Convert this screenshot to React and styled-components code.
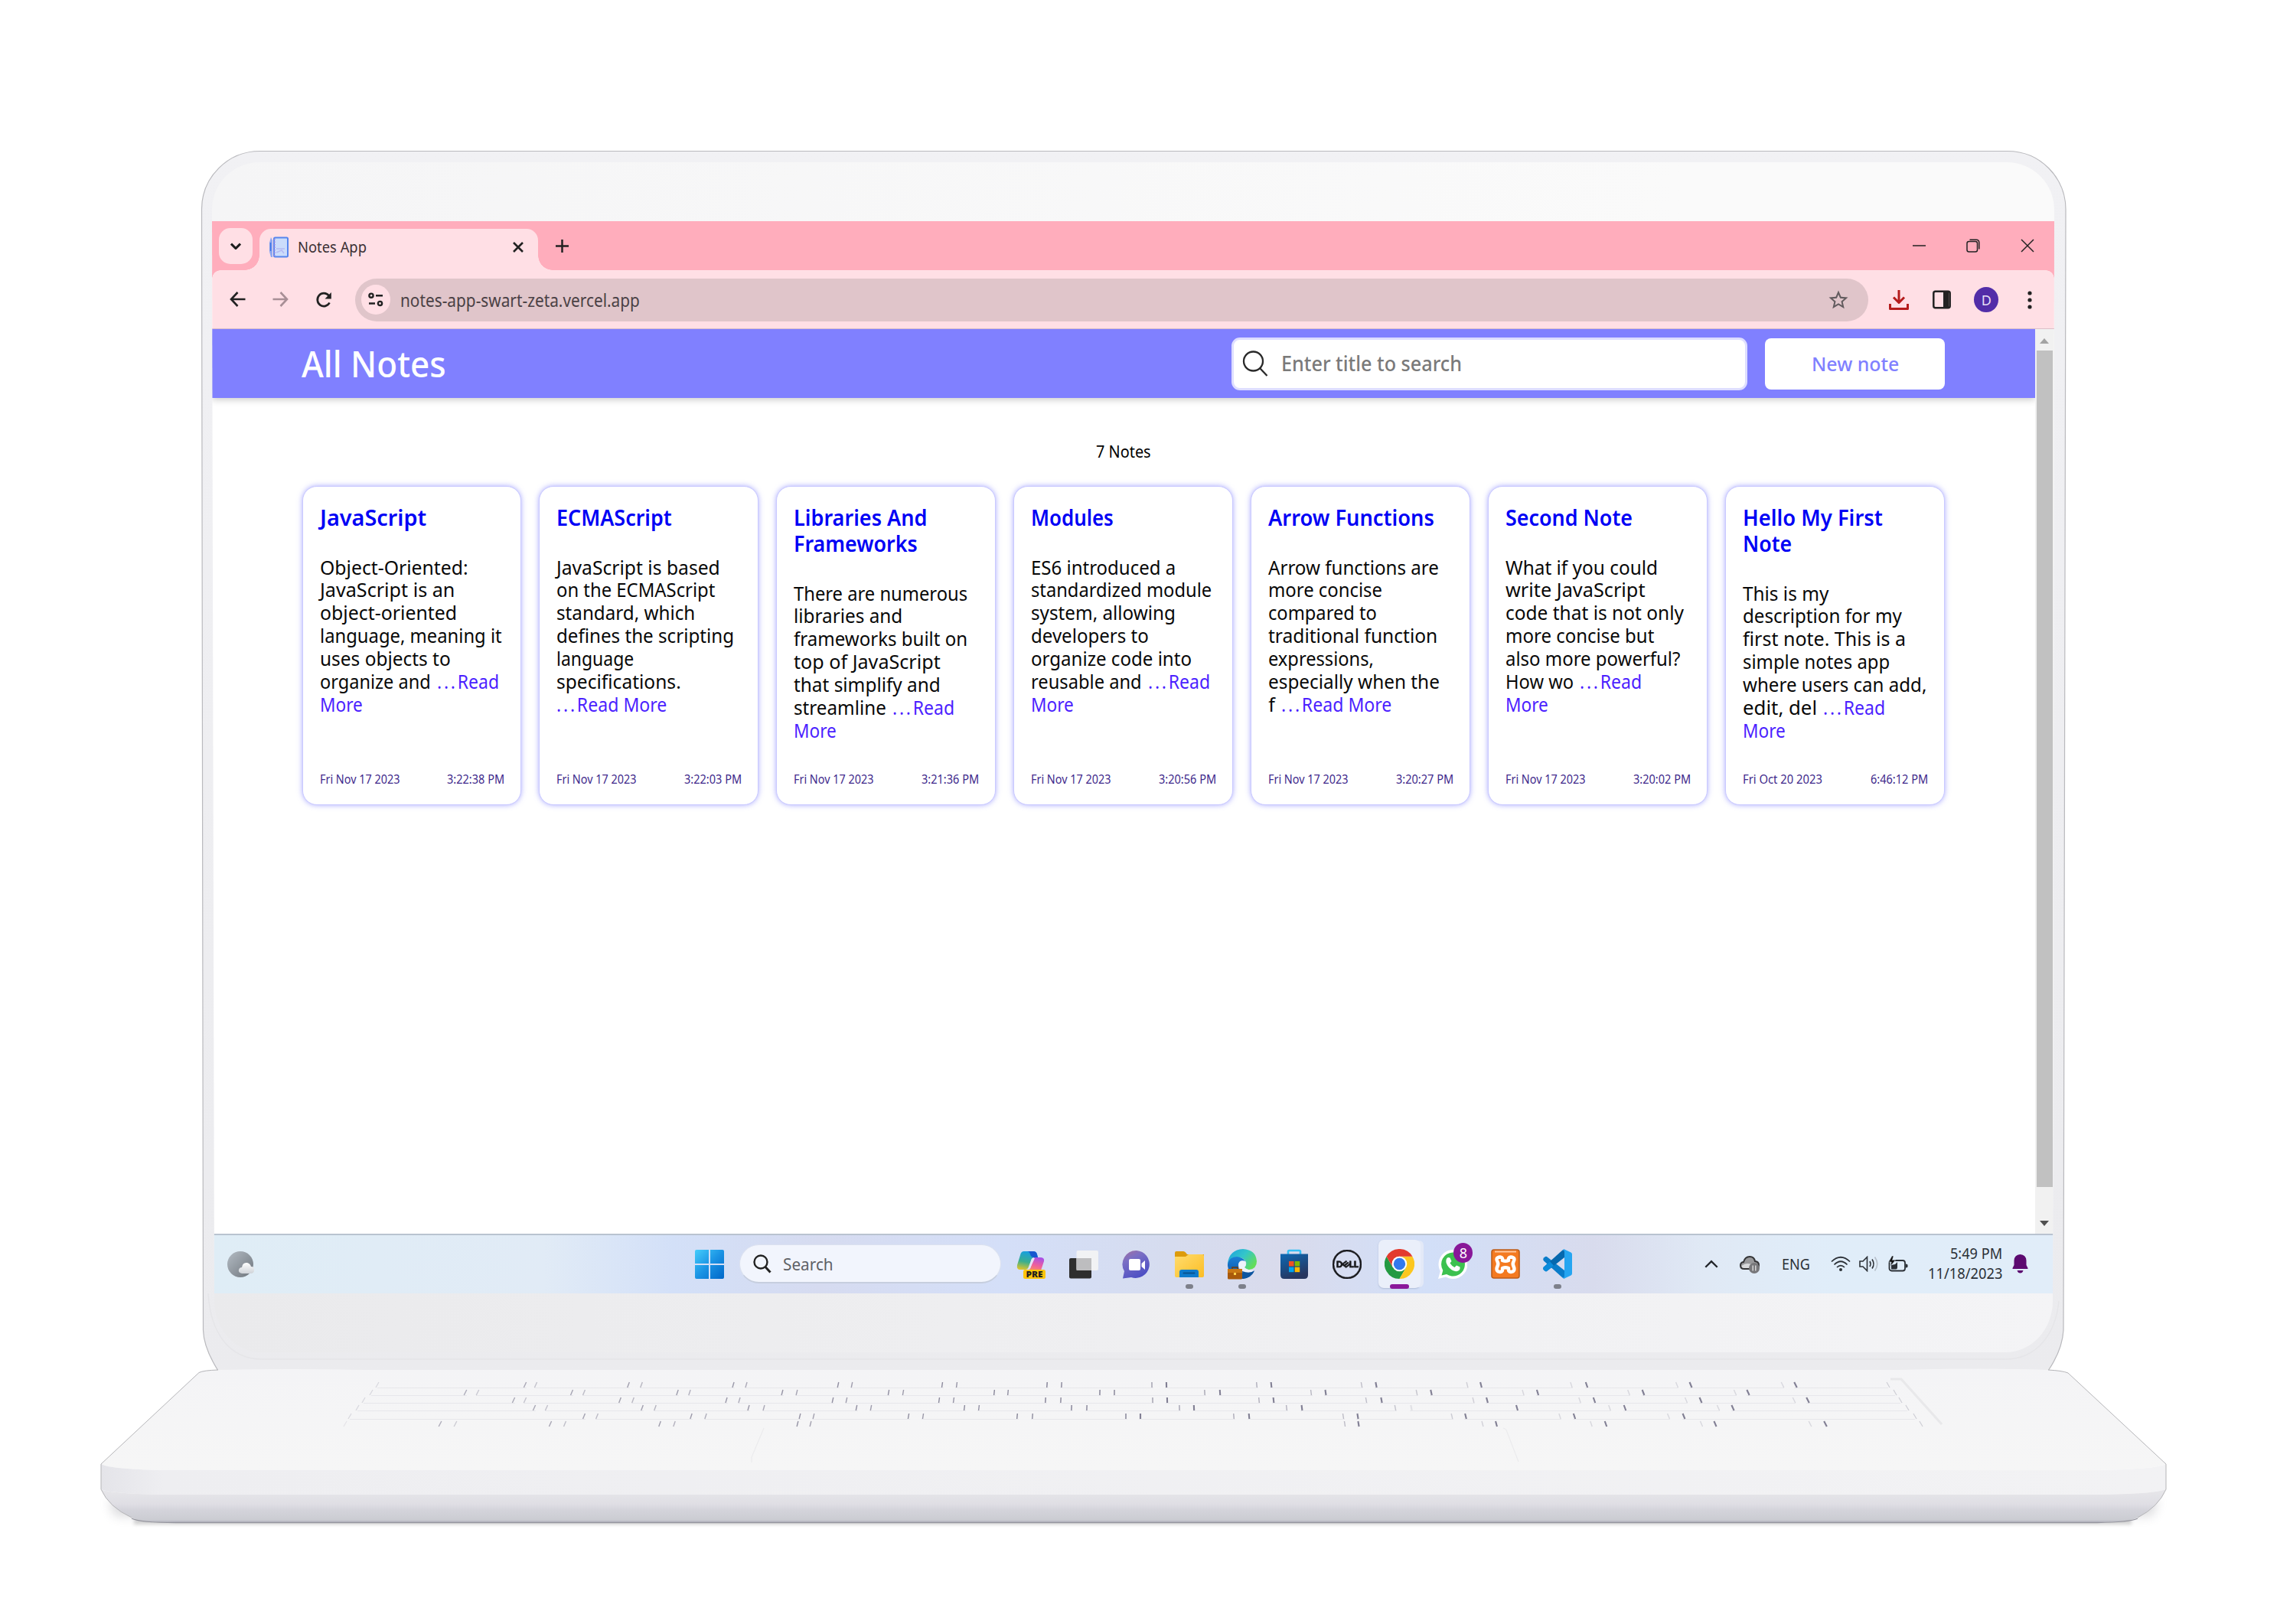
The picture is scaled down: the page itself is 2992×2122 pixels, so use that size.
import React, { useLayoutEffect, useRef, useState } from "react";
import styled, { createGlobalStyle } from "styled-components";
import { SiDell } from "react-icons/si";
import { MdStarBorder } from "react-icons/md";

const GlobalStyle = createGlobalStyle`
  * { box-sizing: border-box; }
  html, body { margin: 0; padding: 0; background: #fff; }
  body { font-family: "Noto Sans", "Open Sans", sans-serif; color: #080808; }
`;

/* ---------- text fitted to a measured width ---------- */

const FitBox = styled.span`
  display: inline-block;
  white-space: nowrap;
`;
const FitInner = styled.span`
  display: inline-block;
  white-space: nowrap;
  transform-origin: 0 50%;
`;

function Fit({ w, children }) {
  const ref = useRef(null);
  const [scale, setScale] = useState(1);
  useLayoutEffect(() => {
    const natural = ref.current.offsetWidth;
    if (natural) setScale((w + 2) / natural);
  }, [w, children]);
  return (
    <FitBox style={{ width: w }}>
      <FitInner ref={ref} style={{ transform: `translateX(-1px) scaleX(${scale})` }}>
        {children}
      </FitInner>
    </FitBox>
  );
}

/* ---------- page frame ---------- */

const Stage = styled.main`
  position: relative;
  width: 2992px;
  height: 2122px;
  padding: 289px 308px 0 277px;
  overflow: hidden;
  background: #fff;
`;
const LaptopArt = styled.svg`
  position: absolute;
  inset: 0;
`;
const Screen = styled.section`
  position: relative;
  display: flex;
  flex-direction: column;
  width: 2407px;
  height: 1401px;
  background: #fff;
  clip-path: polygon(0 0, 100% 0, calc(100% - 2px) 100%, 3px 100%);
`;

/* ---------- laptop drawing ---------- */

const KEY_ROWS = [
  { y: 1806, start: 493, end: 2467, gaps: [[686, 700], [821, 838], [958, 975], [1095, 1113], [1231, 1250], [1368, 1387], [1505, 1524], [1642, 1661], [1779, 1798], [1917, 1935], [2053, 2073], [2191, 2209], [2329, 2346]] },
  { y: 1816, start: 485, end: 2476, gaps: [[608, 624], [747, 763], [885, 901], [1022, 1041], [1161, 1180], [1299, 1317], [1437, 1456], [1574, 1594], [1713, 1732], [1851, 1870], [1990, 2009], [2128, 2147], [2267, 2284]] },
  { y: 1826, start: 475, end: 2483, gaps: [[671, 686], [810, 827], [949, 966], [1088, 1106], [1227, 1246], [1366, 1386], [1506, 1525], [1645, 1664], [1785, 1805], [1925, 1943], [2064, 2083], [2203, 2222], [2344, 2362]] },
  { y: 1836, start: 467, end: 2492, gaps: [[698, 714], [839, 856], [978, 998], [1119, 1138], [1260, 1279], [1400, 1420], [1541, 1560], [1681, 1701], [1823, 1844], [null, 1982], [2103, 2123], [2245, 2264]] },
  { y: 1847, start: 457, end: 2502, gaps: [[763, 780], [903, 922], [1045, 1063], [1187, 1206], [1329, 1349], [1471, 1490], [1612, 1632], [1755, 1774], [1897, 1915], [2038, 2057], [2180, 2200]] },
  { y: 1857, start: 451, end: 2510, plain: true, gaps: [[575, 595], [719, 738], [862, 881], [1042, 1059], [1757, 1775], [1937, 1955], [2079, 2098], [2223, 2241], [2365, 2385]] },
];

function KeyMark({ x, y, opacity, width = 1.6 }) {
  const d = ((x - 1481) / 1481) * 3;
  return <path d={`M${x - d} ${y}L${x + d} ${y + 7}`} stroke="#55526e" strokeWidth={width} opacity={opacity} />;
}

function KeyRow({ row }) {
  const rightOp = (x) => (x < 1481 ? 0.4 + (x - 450) / 3000 : Math.max(0.18, 0.55 - (x - 1481) / 1400));
  const leftOp = (x) => (x < 1481 ? 0.18 + (x - 450) / 1900 : 0.72);
  return (
    <g fill="none">
      {!row.plain && <path d={`M${row.start} ${row.y + 7.5}H${row.end}`} stroke="#e7e7eb" strokeWidth="1" />}
      <KeyMark x={row.start} y={row.y} opacity={row.plain ? 0.1 : 0.18} width={1.2} />
      {row.gaps.map(([a, b]) => (
        <g key={b}>
          {a && !row.plain && <path d={`M${a + 2} ${row.y + 7.5}H${b - 2}`} stroke="#f4f4f6" strokeWidth="1.4" />}
          {a && <KeyMark x={a} y={row.y} opacity={rightOp(a)} width={1.4} />}
          <KeyMark x={b} y={row.y} opacity={b === 1844 ? 0.12 : leftOp(b)} width={b > 1481 ? 2.1 : 1.4} />
        </g>
      ))}
      <KeyMark x={row.end} y={row.y} opacity={0.24} width={1.2} />
    </g>
  );
}

function Laptop() {
  return (
    <LaptopArt width="2992" height="2122" viewBox="0 0 2992 2122" aria-hidden="true">
      <defs>
        <linearGradient id="lidEdge" x1="0" y1="0" x2="0" y2="1">
          <stop offset="0" stopColor="#f1f1f4" />
          <stop offset="1" stopColor="#ebebee" />
        </linearGradient>
        <linearGradient id="lidTop" x1="0" y1="0" x2="1" y2="0">
          <stop offset="0" stopColor="#f5f5f6" />
          <stop offset=".8" stopColor="#fafafa" />
        </linearGradient>
        <linearGradient id="lidBottom" x1="0" y1="0" x2="1" y2="0">
          <stop offset="0" stopColor="#eaeaec" />
          <stop offset="1" stopColor="#f4f4f6" />
        </linearGradient>
        <linearGradient id="deck" x1="0" y1="0" x2="0" y2="1">
          <stop offset="0" stopColor="#f4f4f6" />
          <stop offset="1" stopColor="#f6f6f6" />
        </linearGradient>
        <linearGradient id="frontUpper" x1="0" y1="0" x2="1" y2="0">
          <stop offset="0" stopColor="#e4e4e9" />
          <stop offset=".03" stopColor="#eeeef1" />
          <stop offset="1" stopColor="#f2f2f4" />
        </linearGradient>
        <linearGradient id="frontLower" x1="0" y1="0" x2="0" y2="1">
          <stop offset="0" stopColor="#e7e7ea" />
          <stop offset=".45" stopColor="#dfdee4" />
          <stop offset=".65" stopColor="#d3d3da" />
          <stop offset=".93" stopColor="#cbccd2" />
          <stop offset="1" stopColor="#b4b4c0" />
        </linearGradient>
        <filter id="soft" x="-5%" y="-200%" width="110%" height="500%">
          <feGaussianBlur stdDeviation="7" />
        </filter>
        <filter id="thin" x="-5%" y="-200%" width="110%" height="500%">
          <feGaussianBlur stdDeviation="2" />
        </filter>
      </defs>
      <path d="M142 1960L2820 1960L2812 1981H150Z" fill="#8d8d94" opacity=".32" filter="url(#soft)" />
      <rect x="175" y="1984" width="2610" height="8" fill="#9b9b9b" opacity=".42" filter="url(#thin)" />

      <path d="M285 1791C273 1772 266 1756 265.500 1738L263.500 273A76 76 0 0 1 339.500 197.500H2623A76 76 0 0 1 2699 273.500L2696 1738C2695 1756 2689 1772 2676 1791Z" fill="url(#lidEdge)" stroke="#b9b9bd" strokeWidth="1.2" />
      <path d="M277 330V274A62 62 0 0 1 339 212H2622A62 62 0 0 1 2684 274V330Z" fill="url(#lidTop)" />
      <path d="M280 1650H2682V1700A62 67 0 0 1 2620 1767H342A62 67 0 0 1 280 1700Z" fill="url(#lidBottom)" />
      <path d="M272 1690C275 1742 300 1776 342 1776H2620C2662 1776 2686 1742 2690 1700" fill="none" stroke="#e5e5e8" strokeWidth="1.4" />

      <path d="M260 1793.500C264 1790 280 1790.500 285 1790Q380 1788 476 1790H2480Q2600 1787 2676 1790Q2695 1791 2702 1794L2830 1913Q2815 1920 2740 1921H220Q145 1920 132 1913Z" fill="url(#deck)" />
      <path d="M132 1913Q145 1920 220 1921H2740Q2815 1920 2830 1913V1946Q2815 1952 2740 1953H220Q145 1952 132 1946Z" fill="url(#frontUpper)" />
      <path d="M132 1946Q145 1952 220 1953H2740Q2815 1952 2830 1946Q2820 1969 2793 1983Q2783 1988.500 2740 1989H230Q180 1988.500 172 1983Q142 1969 132 1946Z" fill="url(#frontLower)" />
      <path d="M172 1984Q182 1989.500 230 1989.500H2740Q2783 1989 2793 1984" fill="none" stroke="#96969f" strokeWidth="1.3" />
      <path d="M172 1983Q142 1969 132 1946V1913L260 1793.500Q266 1790.500 285 1790M2676 1790Q2695 1791 2702 1794L2830 1913V1946Q2820 1969 2793 1983" fill="none" stroke="#b5b5b8" strokeWidth="1" />

      {KEY_ROWS.map((row) => (
        <KeyRow key={row.y} row={row} />
      ))}
      <path d="M2470 1802H2484L2537 1861" fill="none" stroke="#e8e8ea" strokeWidth="3" />
      <path d="M1964 1866Q1968 1867 1969 1871L1984 1910M998 1866L982 1904V1911" fill="none" stroke="#ebebed" strokeWidth="1.2" />
    </LaptopArt>
  );
}

/* ---------- browser chrome ---------- */

const TabStrip = styled.div`
  display: flex;
  align-items: flex-start;
  height: 64px;
  padding-left: 9px;
  background: #ffadbc;
`;
const TabListButton = styled.button`
  display: grid;
  place-items: center;
  width: 44px;
  height: 47px;
  margin: 9px 9px 0 0;
  padding: 0;
  border: 0;
  border-radius: 15px;
  background: #ffdfe5;
`;
const Tab = styled.div`
  position: relative;
  display: flex;
  align-items: center;
  width: 364px;
  height: 54px;
  margin-top: 10px;
  padding: 0 19px 7px 12px;
  border-radius: 15px 15px 0 0;
  background: #ffdfe5;
  font-size: 20px;
  color: #3b3034;
  &::before, &::after {
    content: "";
    position: absolute;
    bottom: 0;
    width: 19px;
    height: 19px;
  }
  &::before { left: -19px; background: radial-gradient(circle at 0 0, transparent 18.5px, #ffdfe5 19px); }
  &::after { right: -19px; background: radial-gradient(circle at 100% 0, transparent 18.5px, #ffdfe5 19px); }
`;
const TabTitle = styled.span`
  flex: 1;
  margin-left: 13px;
  line-height: 28px;
`;
const NewTab = styled.span`
  display: flex;
  margin: 24px 0 0 23px;
`;
const WindowControls = styled.div`
  display: flex;
  gap: 53px;
  align-items: center;
  height: 64px;
  margin-left: auto;
  padding-right: 26px;
`;
const Toolbar = styled.div`
  position: relative;
  display: flex;
  align-items: center;
  height: 77px;
  padding: 1px 29px 0 23px;
  border-bottom: 1px solid #dcbfc9;
  background: #ffdfe5;
  &::before, &::after {
    content: "";
    position: absolute;
    top: 0;
    width: 11px;
    height: 11px;
  }
  &::before { left: 0; background: radial-gradient(circle at 100% 100%, transparent 10.5px, #ffadbc 11px); }
  &::after { right: 0; background: radial-gradient(circle at 0 100%, transparent 10.5px, #ffadbc 11px); }
`;
const NavIcons = styled.div`
  display: flex;
  gap: 35px;
  width: 164px;
`;
const Omnibox = styled.div`
  display: flex;
  align-items: center;
  width: 1977px;
  height: 56px;
  padding: 0 24px 0 8px;
  border-radius: 28px;
  background: #e0c5ca;
  font-size: 24px;
  color: #4a4145;
`;
const SiteInfo = styled.span`
  display: grid;
  place-items: center;
  width: 38px;
  height: 39px;
  margin-right: 14px;
  border-radius: 50%;
  background: #ffdfe5;
`;
const Url = styled.span`
  flex: 1;
  line-height: 34px;
`;
const ToolbarActions = styled.div`
  display: flex;
  align-items: center;
  justify-content: space-between;
  width: 187px;
  margin-left: 27px;
`;
const Avatar = styled.span`
  display: grid;
  place-items: center;
  width: 32px;
  height: 33px;
  margin-right: 7px;
  border-radius: 50%;
  background: #522da8;
  color: #e6def5;
  font-size: 18px;
  line-height: 1;
`;

const ChevronIcon = ({ up, w = 13, color = "#1f1f1f", sw = 3 }) => (
  <svg width={w} height={w * 0.66} viewBox="0 0 14 9" fill="none" stroke={color} strokeWidth={sw}>
    <path d={up ? "M1 7.500L7 1.500L13 7.500" : "M1 1.500L7 7.500L13 1.500"} />
  </svg>
);
const NotebookIcon = () => (
  <svg width="26" height="28" viewBox="0 0 26 28">
    <path d="M1 8L3 1L5 5V27H3L1 20Z" fill="#8ea8f0" />
    <path d="M2.500 8V19" stroke="#3f74e6" strokeWidth="1.500" />
    <rect x="7" y="1.500" width="18" height="25" rx="1.500" fill="#cbdcfb" stroke="#5585ee" strokeWidth="2" />
    <path d="M8 3V26" stroke="#b08adf" strokeWidth="1.500" strokeDasharray="1.500 2" />
    <path d="M10 16H21M10 21L17 18L20 22" stroke="#b4b9f3" strokeWidth="1.500" fill="none" />
  </svg>
);
const CrossIcon = ({ s, sw, color = "#222" }) => (
  <svg width={s} height={s} viewBox={`0 0 ${s} ${s}`} stroke={color} strokeWidth={sw}>
    <path d={`M1 1L${s - 1} ${s - 1}M${s - 1} 1L1 ${s - 1}`} />
  </svg>
);
const ArrowIcon = ({ flip, color }) => (
  <svg width="21" height="20" viewBox="0 0 21 20" fill="none" stroke={color} strokeWidth="2.600">
    <path d={flip ? "M.5 10H18.500M10.500 1L19 10L10.500 19" : "M20.500 10H2.500M10.500 1L2 10L10.500 19"} />
  </svg>
);
const ReloadIcon = () => (
  <svg width="22" height="22" viewBox="0 0 22 22" fill="none">
    <path d="M18.500 14.500A8.300 8.500 0 1 1 17.500 5.200L19 7" stroke="#222" strokeWidth="2.700" />
    <path d="M20.800 1V9.500H12.500Z" fill="#222" />
  </svg>
);

function Browser() {
  return (
    <>
      <TabStrip>
        <TabListButton aria-label="Search tabs"><ChevronIcon w={14} /></TabListButton>
        <Tab>
          <NotebookIcon />
          <TabTitle><Fit w={88}>Notes App</Fit></TabTitle>
          <CrossIcon s={14} sw={2.6} />
        </Tab>
        <NewTab>
          <svg width="17" height="17" viewBox="0 0 17 17" stroke="#222" strokeWidth="2.500"><path d="M8.500 0V17M0 8.500H17" /></svg>
        </NewTab>
        <WindowControls>
          <svg width="17" height="18" viewBox="0 0 17 18" stroke="#222" strokeWidth="1.500"><path d="M0 9H17" /></svg>
          <svg width="18" height="18" viewBox="0 0 18 18" fill="none" stroke="#222" strokeWidth="1.500">
            <rect x="1" y="3.500" width="13.500" height="13.500" rx="2.500" />
            <path d="M4.500 1.200H13Q16.800 1.200 16.800 5V13.500" />
          </svg>
          <CrossIcon s={18} sw={1.5} />
        </WindowControls>
      </TabStrip>
      <Toolbar>
        <NavIcons>
          <ArrowIcon color="#222" />
          <ArrowIcon color="#a88f96" flip />
          <ReloadIcon />
        </NavIcons>
        <Omnibox>
          <SiteInfo>
            <svg width="20" height="19" viewBox="0 0 20 19" fill="none" stroke="#222" strokeWidth="2.400">
              <circle cx="4" cy="4.200" r="2.600" /><path d="M10 4.200H19M1 14.500H9" /><circle cx="15.500" cy="14.500" r="2.600" />
            </svg>
          </SiteInfo>
          <Url><Fit w={311}>notes-app-swart-zeta.vercel.app</Fit></Url>
          <MdStarBorder size={30} color="#625b5e" />
        </Omnibox>
        <ToolbarActions>
          <svg width="26" height="28" viewBox="0 0 26 28" fill="none" stroke="#b51c1c" strokeWidth="3">
            <path d="M13 1V17M6 10.500L13 17.500L20 10.500M1.500 19V25.500H24.500V19" strokeLinejoin="round" />
          </svg>
          <svg width="24" height="25" viewBox="0 0 24 25">
            <rect x="1.300" y="1.800" width="21.400" height="21.400" rx="2.500" fill="none" stroke="#222" strokeWidth="2.500" />
            <path d="M14 2H21.500V23H14Z" fill="#222" />
          </svg>
          <Avatar>D</Avatar>
          <svg width="6" height="24" viewBox="0 0 6 24" fill="#222"><circle cx="3" cy="3" r="2.600" /><circle cx="3" cy="12" r="2.600" /><circle cx="3" cy="21" r="2.600" /></svg>
        </ToolbarActions>
      </Toolbar>
    </>
  );
}

/* ---------- notes page ---------- */

const Viewport = styled.div`
  display: flex;
  height: 1182px;
`;
const Page = styled.div`
  width: 2382px;
`;
const Header = styled.header`
  display: flex;
  align-items: center;
  height: 90px;
  padding: 0 118px;
  background: #8080ff;
  box-shadow: 0 2px 9px rgba(0, 0, 0, 0.22);
`;
const Brand = styled.h1`
  flex: 1;
  margin: 0 0 1px;
  font-size: 48px;
  font-weight: 500;
  line-height: 66px;
  color: #fff;
`;
const SearchField = styled.label`
  display: flex;
  align-items: center;
  gap: 18px;
  width: 674px;
  height: 69px;
  padding-left: 11px;
  border: 3px solid #dedeff;
  border-radius: 11px;
  background: #fff;
  font-size: 27px;
  font-weight: 500;
  line-height: 38px;
  color: #7a7a7a;
`;
const NewNoteButton = styled.button`
  width: 235px;
  height: 67px;
  margin-left: 23px;
  padding: 0;
  border: 0;
  border-radius: 8px;
  background: #fff;
  font: 500 26px/38px "Noto Sans", "Open Sans", sans-serif;
  color: #8080ff;
`;
const Count = styled.p`
  margin: 58px 0 33px;
  text-align: center;
  font-size: 21px;
  line-height: 24px;
  color: #000;
`;
const CardGrid = styled.div`
  display: grid;
  grid-template-columns: repeat(7, 1fr);
  gap: 23px;
  padding: 0 118px 0 117.5px;
`;
const Card = styled.article`
  display: flex;
  flex-direction: column;
  height: 417px;
  padding: 23px 22px 23px 23px;
  border: 1px solid #c9c9ff;
  border-radius: 19px;
  background: #fff;
  box-shadow: 0 0 7px rgba(100, 100, 255, 0.55);
`;
const CardTitle = styled.h2`
  margin: 0 0 33.5px;
  font-size: 28px;
  font-weight: 600;
  line-height: 34px;
  color: #0000f5;
`;
const Line = styled.div`
  display: flex;
  gap: 10px;
`;
const CardBody = styled.div`
  flex: 1;
  font-size: 25px;
  line-height: 29.85px;
`;
const ReadMore = styled.a`
  color: #4b1fff;
`;
const Dots = styled.span`
  letter-spacing: 3px;
`;
const CardFooter = styled.footer`
  display: flex;
  justify-content: space-between;
  font-size: 15.5px;
  line-height: 20px;
  color: #412a8c;
`;
const Scrollbar = styled.div`
  display: flex;
  flex-direction: column;
  align-items: center;
  width: 25px;
  padding: 12px 1px 10px 0;
  background: #f1f1f1;
`;
const Thumb = styled.div`
  width: 21px;
  height: 1093px;
  margin: 9px 0 auto;
  background: #c1c1c1;
`;

const NOV = "Fri Nov 17 2023";
const READ = ["Read", 79];
const READ_MORE = ["Read More", 142];
const MORE = 54;

const NOTES = [
  {
    title: [["JavaScript", 137]],
    lines: [["Object-Oriented:", 192], ["JavaScript is an", 174], ["object-oriented", 177], ["language, meaning it", 236], ["uses objects to", 169], ["organize and", 143, READ]],
    date: NOV, time: "3:22:38 PM",
  },
  {
    title: [["ECMAScript", 149]],
    lines: [["JavaScript is based", 212], ["on the ECMAScript", 205], ["standard, which", 179], ["defines the scripting", 230], ["language", 99], ["specifications.", 161], [null, 0, READ_MORE]],
    date: NOV, time: "3:22:03 PM",
  },
  {
    title: [["Libraries And", 172], ["Frameworks", 160]],
    lines: [["There are numerous", 225], ["libraries and", 140], ["frameworks built on", 225], ["top of JavaScript", 190], ["that simplify and", 190], ["streamline", 119, READ]],
    date: NOV, time: "3:21:36 PM",
  },
  {
    title: [["Modules", 106]],
    lines: [["ES6 introduced a", 187], ["standardized module", 234], ["system, allowing", 187], ["developers to", 152], ["organize code into", 208], ["reusable and", 143, READ]],
    date: NOV, time: "3:20:56 PM",
  },
  {
    title: [["Arrow Functions", 215]],
    lines: [["Arrow functions are", 221], ["more concise", 147], ["compared to", 140], ["traditional function", 219], ["expressions,", 136], ["especially when the", 222], ["f", 7, READ_MORE]],
    date: NOV, time: "3:20:27 PM",
  },
  {
    title: [["Second Note", 164]],
    lines: [["What if you could", 197], ["write JavaScript", 181], ["code that is not only", 231], ["more concise but", 192], ["also more powerful?", 226], ["How wo", 87, READ]],
    date: NOV, time: "3:20:02 PM",
  },
  {
    title: [["Hello My First", 181], ["Note", 62]],
    lines: [["This is my", 110], ["description for my", 206], ["first note. This is a", 211], ["simple notes app", 190], ["where users can add,", 238], ["edit, del", 95, READ]],
    date: "Fri Oct 20 2023", time: "6:46:12 PM",
  },
];

function NoteCard({ note }) {
  const wraps = note.lines[note.lines.length - 1][2] === READ;
  return (
    <Card>
      <CardTitle>
        {note.title.map(([text, w]) => (
          <Line key={text}><Fit w={w}>{text}</Fit></Line>
        ))}
      </CardTitle>
      <CardBody>
        {note.lines.map(([text, w, link]) => (
          <Line key={text || "link"}>
            {text && <Fit w={w}>{text}</Fit>}
            {link && <ReadMore><Fit w={link[1]}><Dots>...</Dots>{link[0]}</Fit></ReadMore>}
          </Line>
        ))}
        {wraps && <Line><ReadMore><Fit w={MORE}>More</Fit></ReadMore></Line>}
      </CardBody>
      <CardFooter>
        <Fit w={102}>{note.date}</Fit>
        <Fit w={73}>{note.time}</Fit>
      </CardFooter>
    </Card>
  );
}

function NotesPage() {
  return (
    <Viewport>
      <Page>
        <Header>
          <Brand><Fit w={187}>All Notes</Fit></Brand>
          <SearchField>
            <svg width="34" height="34" viewBox="0 0 34 34" fill="none" stroke="#2a2a2a" strokeWidth="2.300">
              <circle cx="14.500" cy="14" r="12.500" /><path d="M23.500 23.500L32.500 33" />
            </svg>
            <Fit w={234}>Enter title to search</Fit>
          </SearchField>
          <NewNoteButton><Fit w={112}>New note</Fit></NewNoteButton>
        </Header>
        <Count><Fit w={70}>7 Notes</Fit></Count>
        <CardGrid>
          {NOTES.map((note) => <NoteCard key={note.title[0][0]} note={note} />)}
        </CardGrid>
      </Page>
      <Scrollbar>
        <svg width="12" height="7" viewBox="0 0 12 7"><path d="M6 0L12 7H0Z" fill="#a3a3a3" /></svg>
        <Thumb />
        <svg width="12" height="7" viewBox="0 0 12 7"><path d="M0 0H12L6 7Z" fill="#505050" /></svg>
      </Scrollbar>
    </Viewport>
  );
}

/* ---------- taskbar ---------- */

const Taskbar = styled.footer`
  display: flex;
  align-items: center;
  height: 78px;
  padding: 0 34px 1px 20px;
  border-top: 2px solid #b9c3d0;
  background: linear-gradient(90deg, #dfedf6 0, #e1ebf6 18%, #d3e0f8 25%, #d6dbf0 33%, #d4dff8 43%, #d6dcef 52%, #d9dbec 58%, #d2dff8 66%, #d8dbed 75%, #e0e9f5 81%, #e0edf9 88%, #e1edf9 100%);
`;
const Weather = styled.span`
  display: flex;
  width: 36px;
  margin-right: 575px;
`;
const TaskSearch = styled.div`
  display: flex;
  align-items: center;
  gap: 16px;
  width: 342px;
  height: 51px;
  margin: 0 5px 0 20px;
  padding-left: 17px;
  border: 1px solid #dbe1ef;
  border-bottom: 2px solid #c6cede;
  border-radius: 26px;
  background: #f2f5fd;
  font-size: 22px;
  color: #5e6166;
`;
const AppSlot = styled.span`
  position: relative;
  display: grid;
  place-items: center;
  width: 68.8px;
  height: 64px;
  &::after {
    content: "";
    position: absolute;
    bottom: 0;
    width: ${(p) => (p.$state === "active" ? 25 : p.$state === "running" ? 10 : 0)}px;
    height: 6px;
    border-radius: 3px;
    background: ${(p) => (p.$state === "active" ? "#8a189a" : "#7d808a")};
  }
`;
const ActiveTile = styled.span`
  display: grid;
  place-items: center;
  width: 55px;
  height: 63px;
  border-radius: 7px;
  background: #eaeffa;
  box-shadow: 5px 0 0 -1px #e3e9f7, 0 1px 2px rgba(110, 125, 160, 0.35);
`;
const Badge = styled.span`
  position: absolute;
  top: 4px;
  left: 36px;
  display: grid;
  place-items: center;
  width: 25px;
  height: 26px;
  border-radius: 50%;
  background: #881798;
  color: #fff;
  font-size: 18px;
  line-height: 1;
`;
const Tray = styled.div`
  display: flex;
  align-items: center;
  margin-left: auto;
  font-size: 20px;
  color: #2b3036;
`;
const TrayItem = styled.span`
  display: flex;
  margin-left: ${(p) => p.$gap}px;
`;
const Clock = styled.span`
  display: flex;
  flex-direction: column;
  align-items: flex-end;
  width: 96px;
  margin: 0 14px 2px 26px;
  line-height: 26px;
`;

const WeatherIcon = () => (
  <svg width="36" height="36" viewBox="0 0 36 36">
    <defs>
      <linearGradient id="moon" x1="0" y1="0" x2="1" y2="1"><stop offset="0" stopColor="#b4bcc4" /><stop offset="1" stopColor="#6e757c" /></linearGradient>
      <linearGradient id="cloudlet" x1="0" y1="0" x2="0" y2="1"><stop offset="0" stopColor="#fff" /><stop offset="1" stopColor="#cfd3d8" /></linearGradient>
    </defs>
    <circle cx="17" cy="18" r="17" fill="url(#moon)" />
    <path d="M19 30Q14 29 15 25Q16 22 19 22Q20 15 26 16Q30 17 31 21Q36 21 35 26Q35 30 30 30Z" fill="url(#cloudlet)" />
  </svg>
);
const WindowsIcon = () => (
  <svg width="38" height="38" viewBox="0 0 38 38">
    <defs><linearGradient id="win" x1="0" y1="0" x2="1" y2="1"><stop offset="0" stopColor="#45cdfb" /><stop offset=".5" stopColor="#1a93e4" /><stop offset="1" stopColor="#0067c8" /></linearGradient></defs>
    <path d="M2 0H18V18H0V2Q0 0 2 0ZM20 0H36Q38 0 38 2V18H20ZM0 20H18V38H2Q0 38 0 36ZM20 20H38V36Q38 38 36 38H20Z" fill="url(#win)" />
  </svg>
);
const PreText = styled.text`
  font: 800 10px "Open Sans", sans-serif;
  fill: #1d1d1d;
`;
const CopilotIcon = () => (
  <svg width="38" height="38" viewBox="0 0 38 38">
    <defs>
      <linearGradient id="cpA" x1=".4" y1="0" x2=".2" y2="1"><stop offset="0" stopColor="#189fdf" /><stop offset=".55" stopColor="#3aae8f" /><stop offset="1" stopColor="#e3c527" /></linearGradient>
      <linearGradient id="cpB" x1=".6" y1="0" x2=".3" y2="1"><stop offset="0" stopColor="#a94fe6" /><stop offset=".6" stopColor="#f0609a" /><stop offset="1" stopColor="#f88a66" /></linearGradient>
    </defs>
    <path d="M10 2H22Q26 2 27 6L28 10H24Q20 10 19 14L16 22Q15 26 11 26H5Q0 26 1 20L5 7Q6 2 10 2Z" fill="url(#cpA)" />
    <path d="M14 2H22Q26 2 27 6L28 10H23Q19 10 18 6Q17 2 14 2Z" fill="#1757cf" />
    <path d="M23 10H31Q37 10 36 15L32 27H15Q18 26 19 22Z" fill="url(#cpB)" />
    <path d="M20 12L16 24H18L24 11Q21 10 20 12Z" fill="#e8e2f8" />
    <rect x="9" y="26" width="29" height="12" rx="2.500" fill="#fdc50b" />
    <PreText x="12.500" y="35.800" textLength="22" lengthAdjust="spacingAndGlyphs">PRE</PreText>
  </svg>
);
const TaskViewIcon = () => (
  <svg width="38" height="38" viewBox="0 0 38 38">
    <rect x="0" y="11" width="29" height="26.500" rx="2" fill="#2e2e2e" />
    <rect x="9.500" y="1" width="28.500" height="26" rx="2" fill="#f1f2f4" />
    <path d="M9.500 11H29V27H9.500Z" fill="#bdbdbf" />
  </svg>
);
const ChatIcon = () => (
  <svg width="38" height="38" viewBox="0 0 38 38">
    <defs><linearGradient id="chat" x1="0" y1="0" x2=".5" y2="1"><stop offset="0" stopColor="#a5709f" /><stop offset=".35" stopColor="#7b6fc4" /><stop offset="1" stopColor="#4e50c4" /></linearGradient></defs>
    <path d="M19 1A18 18 0 1 1 12 36L1 37.500L3 28A18 18 0 0 1 19 1Z" fill="url(#chat)" />
    <rect x="9" y="12" width="15" height="15" rx="2" fill="#fff" />
    <path d="M25.500 18L30 14V26L25.500 22Z" fill="#fff" />
  </svg>
);
const ExplorerIcon = () => (
  <svg width="38" height="38" viewBox="0 0 38 38">
    <defs><linearGradient id="fold" x1="0" y1="0" x2="1" y2="1"><stop offset="0" stopColor="#ffdc6e" /><stop offset="1" stopColor="#fcbd24" /></linearGradient></defs>
    <path d="M0 10V4Q0 2 2 2H11Q13 2 14 3.500L16 6H38V12H0Z" fill="#dd9b0b" />
    <path d="M0 9H14L18 6H36Q38 6 38 8V34Q38 36 36 36H2Q0 36 0 34Z" fill="url(#fold)" />
    <path d="M6 36V29Q6 26 9 26H28Q31 26 31 29V36Z" fill="#0e7acb" />
    <rect x="10.500" y="29.500" width="16" height="2" rx="1" fill="#08528f" />
  </svg>
);
const EdgeIcon = () => (
  <svg width="38" height="40" viewBox="0 0 38 40">
    <defs>
      <linearGradient id="edA" x1="0" y1="0" x2="1" y2=".6"><stop offset="0" stopColor="#1ba0e0" /><stop offset=".55" stopColor="#34c6c9" /><stop offset="1" stopColor="#62dd5a" /></linearGradient>
      <linearGradient id="edB" x1="0" y1="0" x2="0" y2="1"><stop offset="0" stopColor="#1b80d8" /><stop offset="1" stopColor="#0c4f9e" /></linearGradient>
    </defs>
    <path d="M0 19Q2 1 20 0Q37 1 38 16Q38 26 28 27Q22 27 22 24Q25 21 24 17Q20 9 10 12Q3 14 0 21Z" fill="url(#edA)" />
    <path d="M0 20Q2 10 12 10Q20 11 23 16Q16 14 14 21Q14 32 26 33Q31 32 35 29Q30 38 19 39Q2 37 0 22Z" fill="url(#edB)" />
    <path d="M23 16Q15 13.500 14 20Q15 26 20 29Q28 32 35 28Q26 28 22 24Q25 21 23 16Z" fill="#edf3fb" />
    <path d="M19 29Q29 33 35 28Q31 38 20 39Z" fill="#0d559f" />
    <path d="M6 27V24H13V27" fill="none" stroke="#6e3a08" strokeWidth="1.500" />
    <rect x="0" y="26" width="19" height="13.500" rx="1.500" fill="#a95a0b" />
    <path d="M0 26H19V31H0Z" fill="#c97714" />
    <rect x="8" y="31" width="3" height="3" fill="#ffd24b" />
  </svg>
);
const StoreIcon = () => (
  <svg width="38" height="40" viewBox="0 0 38 40">
    <defs><linearGradient id="store" x1="0" y1="0" x2=".4" y2="1"><stop offset="0" stopColor="#0d69b4" /><stop offset="1" stopColor="#27365f" /></linearGradient></defs>
    <path d="M11 8V3.500Q11 2 12.500 2H25.500Q27 2 27 3.500V8" fill="none" stroke="#36c0f5" strokeWidth="2.600" />
    <path d="M1 6.500H37V34Q37 39 32 39H6Q1 39 1 34Z" fill="url(#store)" />
    <path d="M12 16H18.500V22.500H12Z" fill="#f25022" /><path d="M19.700 16H26.200V22.500H19.700Z" fill="#7fba00" />
    <path d="M12 23.700H18.500V30.200H12Z" fill="#00a4ef" /><path d="M19.700 23.700H26.200V30.200H19.700Z" fill="#ffb900" />
  </svg>
);
const ChromeIcon = () => (
  <svg width="39" height="39" viewBox="0 0 48 48">
    <path d="M3.200 12A24 24 0 0 0 24 48L34.400 30L24 24L13.600 30Z" fill="#249a42" />
    <path d="M24 48A24 24 0 0 0 44.800 12H24L34.400 30Z" fill="#fcc71f" />
    <path d="M3.200 12A24 24 0 0 1 44.800 12H24A12 12 0 0 0 13.600 30Z" fill="#e33b2e" />
    <circle cx="24" cy="24" r="12" fill="#fff" />
    <circle cx="24" cy="24" r="9.500" fill="#3279ed" />
  </svg>
);
const WhatsAppIcon = () => (
  <svg width="38" height="38" viewBox="0 0 38 38">
    <path d="M19 0A19 19 0 1 1 10 35.500L0 38L2.800 28A19 19 0 0 1 19 0Z" fill="#fff" />
    <path d="M19 3.500A15.500 15.500 0 1 1 11 32L4.500 33.500L6.300 27A15.500 15.500 0 0 1 19 3.500Z" fill="#3cc14f" />
    <path d="M13 10L15.500 10.500L17.500 15L15.500 17.500Q18 21.500 21.500 23L24 20.500L28.500 22.500Q29 27 25 28Q20 29 14.500 23.500Q9.500 18 10.500 13Q11.300 10.500 13 10Z" fill="#fff" />
  </svg>
);
const XamppIcon = () => (
  <svg width="38" height="39" viewBox="0 0 38 39">
    <rect x="1" y="1" width="36" height="37" rx="3" fill="#f47a20" stroke="#bd5e1a" strokeWidth="1.600" />
    <path d="M5 3.500H33" stroke="#ffc79c" strokeWidth="2" />
    <path d="M12 10.500Q5.500 11 8.500 16.500Q10 19.500 8.500 22.500Q5.500 29.500 12 30Q16 29.500 15 25Q19 23.500 23 25Q22 29.500 26 30Q32.500 29.500 29.500 22.500Q28 19.500 29.500 16.500Q32.500 11 26 10.500Q22 11 23 15Q19 16.500 15 15Q16 11 12 10.500Z" fill="none" stroke="#fff" strokeWidth="4.500" strokeLinejoin="round" />
  </svg>
);
const VsCodeIcon = () => (
  <svg width="38" height="39" viewBox="0 0 38 39">
    <path d="M1 11.500L3 10Q4 9.500 5 10L28 28V38.500L25.500 37.500L1 15.500Q-.5 13.500 1 11.500Z" fill="#0a7cc9" />
    <path d="M1 27.500L3 29Q4 29.500 5 29L28 11V.500L25.500 1.500L1 23.500Q-.5 25.500 1 27.500Z" fill="#0568ae" />
    <path d="M1 27.500L3 29Q4 29.500 5 29L14 21.800L9 16.200L1 23.500Q-.5 25.500 1 27.500Z" fill="#0a8bdb" />
    <path d="M28 .500L36.500 4.500Q38 5.300 38 7V32Q38 33.700 36.500 34.500L28 38.500Q26.500 39 25.500 37.500Q28 38 28 35V4Q28 1 25.500 1.500Q26.500 0 28 .500Z" fill="#25a5f1" />
  </svg>
);

function Apps() {
  return (
    <>
      <AppSlot><CopilotIcon /></AppSlot>
      <AppSlot><TaskViewIcon /></AppSlot>
      <AppSlot><ChatIcon /></AppSlot>
      <AppSlot $state="running"><ExplorerIcon /></AppSlot>
      <AppSlot $state="running"><EdgeIcon /></AppSlot>
      <AppSlot><StoreIcon /></AppSlot>
      <AppSlot><SiDell size={38} color="#17181b" stroke="#17181b" strokeWidth={0.4} /></AppSlot>
      <AppSlot $state="active"><ActiveTile><ChromeIcon /></ActiveTile></AppSlot>
      <AppSlot><WhatsAppIcon /><Badge>8</Badge></AppSlot>
      <AppSlot><XamppIcon /></AppSlot>
      <AppSlot $state="running"><VsCodeIcon /></AppSlot>
    </>
  );
}

function SystemTray() {
  return (
    <Tray>
      <ChevronIcon up w={18} sw={1.8} color="#22262b" />
      <TrayItem $gap={28}>
        <svg width="26" height="24" viewBox="0 0 26 24">
          <path d="M6 18Q1 18 1 13.500Q1 9.500 5 9Q7 2 13 2Q19 2 20 8Q25 8.500 25 13Q25 18 20 18Z" fill="#98989a" stroke="#333335" strokeWidth="2" />
          <path d="M2.500 14Q8 9 15 12L21 16L14 17H6Q2.500 17 2.500 14Z" fill="#d9dadc" />
          <circle cx="19" cy="17" r="7" fill="#77777a" />
          <path d="M17.200 13.500V20.500M20.800 13.500V20.500" stroke="#dcdcdc" strokeWidth="1.400" />
        </svg>
      </TrayItem>
      <TrayItem $gap={30}><Fit w={35}>ENG</Fit></TrayItem>
      <TrayItem $gap={28}>
        <svg width="26" height="21" viewBox="0 0 26 21" fill="none" stroke="#2b3036" strokeWidth="1.700">
          <path d="M1 7.500Q13 -4 25 7.500M4.500 11.500Q13 3 21.500 11.500M8 15Q13 10 18 15" />
          <circle cx="13" cy="18" r="2" fill="#2b3036" stroke="none" />
        </svg>
      </TrayItem>
      <TrayItem $gap={11}>
        <svg width="26" height="21" viewBox="0 0 26 21" fill="none" stroke="#2b3036" strokeWidth="1.600">
          <path d="M1 7H5L10.500 1.500V19.500L5 14H1Z" />
          <path d="M14 7Q16 10.500 14 14M17 4.500Q21 10.500 17 16.500" />
          <path d="M20.500 1.500Q27 10.500 20.500 19.500" stroke="#b6bfc9" />
        </svg>
      </TrayItem>
      <TrayItem $gap={12}>
        <svg width="26" height="22" viewBox="0 0 26 22" fill="none">
          <rect x="1.500" y="6" width="20.500" height="13.500" rx="3" stroke="#2b3036" strokeWidth="1.800" />
          <path d="M23 10.500Q26 10.500 25.500 13Q26 15.500 23 15.500Z" fill="#2b3036" />
          <path d="M4 17.500V12L9 11L12 8V15Q12 17.500 10 17.500Z" fill="#2b3036" />
          <path d="M5 0L.500 8H4L3 13.500L9.500 5.500H5.500L7 0Z" fill="#111" stroke="#e1edf9" strokeWidth=".5" />
        </svg>
      </TrayItem>
      <Clock>
        <Fit w={66}>5:49 PM</Fit>
        <Fit w={95}>11/18/2023</Fit>
      </Clock>
      <svg width="21" height="25" viewBox="0 0 21 25" fill="#5c0a70">
        <path d="M10.500 0Q18 .5 18.500 8V14L20.500 18Q20.800 19 20 19H1Q.2 19 .5 18L2.500 14V8Q3 .5 10.500 0Z" />
        <path d="M6.500 21H14.500Q13.500 24.500 10.500 24.500Q7.500 24.500 6.500 21Z" />
      </svg>
    </Tray>
  );
}

export default function App() {
  return (
    <Stage>
      <GlobalStyle />
      <Laptop />
      <Screen>
        <Browser />
        <NotesPage />
        <Taskbar>
          <Weather><WeatherIcon /></Weather>
          <WindowsIcon />
          <TaskSearch>
            <svg width="24" height="25" viewBox="0 0 24 25" fill="none" stroke="#222" strokeWidth="2.400">
              <circle cx="10" cy="10" r="8.500" /><path d="M16 16.500L22.500 23.500" strokeWidth="3" />
            </svg>
            <Fit w={64}>Search</Fit>
          </TaskSearch>
          <Apps />
          <SystemTray />
        </Taskbar>
      </Screen>
    </Stage>
  );
}
